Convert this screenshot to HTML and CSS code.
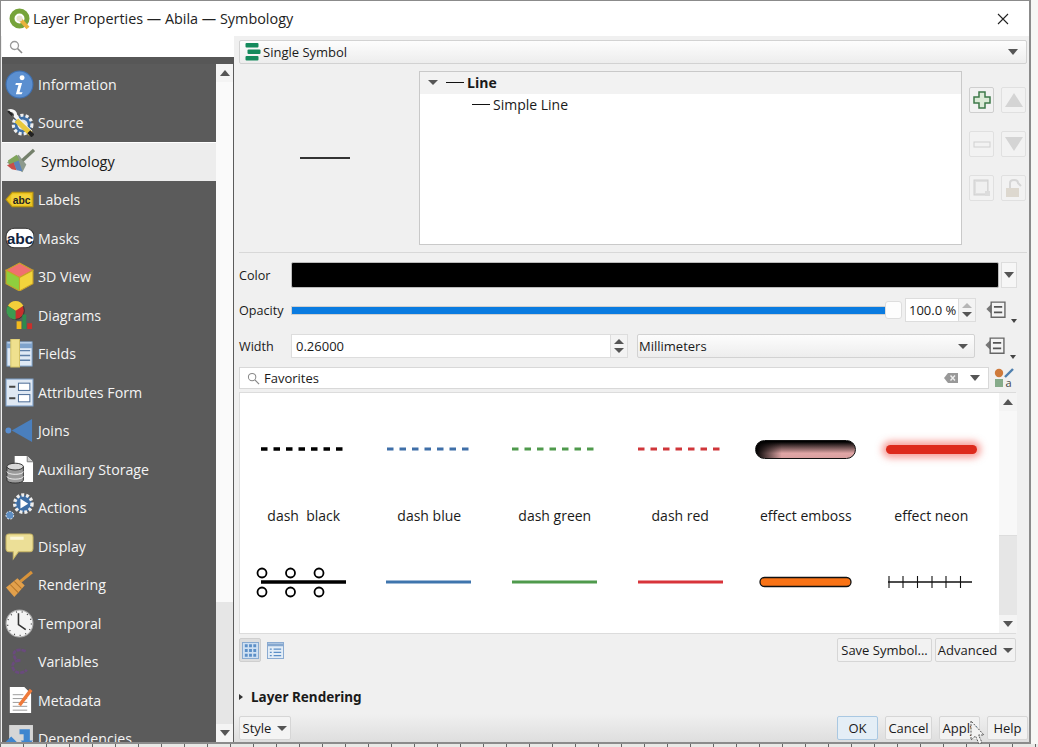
FILE: index.html
```html
<!DOCTYPE html>
<html lang="en">
<head>
<meta charset="utf-8">
<title>Layer Properties — Abila — Symbology</title>
<link rel="stylesheet" href="styles.css">
</head>
<body>
<svg class="defs" width="0" height="0" aria-hidden="true">
  <defs>
    <symbol id="dd" viewBox="0 0 32 32"><path d="M2 16 L9 9 V23 Z" fill="#777"/><path d="M9 6 H29 V28 H9 Z" fill="#f4f4f4" stroke="#666" stroke-width="2"/><path d="M13 13 H25 M13 21 H25" stroke="#555" stroke-width="2.5"/></symbol>
  </defs>
</svg>
<div class="window">
  <header class="titlebar">
    <svg class="logo" viewBox="0 0 22 22"><circle cx="10.500" cy="10.500" r="7.500" fill="none" stroke="#76a33a" stroke-width="5"/><path d="M10 10 L19 20" stroke="#e9b23c" stroke-width="4"/><circle cx="10.500" cy="10.500" r="3" fill="#e8e2cf"/></svg>
    <span class="title">Layer Properties — Abila — Symbology</span>
    <svg class="close" viewBox="0 0 12 12"><path d="M1 1 L11 11 M11 1 L1 11" stroke="#222" stroke-width="1.100" fill="none"/></svg>
  </header>
  <div class="body">
    <aside class="nav">
      <div class="nav-search">
        <svg class="mag" viewBox="0 0 14 14"><circle cx="5.500" cy="5.500" r="4" fill="none" stroke="#999" stroke-width="1.300"/><path d="M8.500 8.500 L13 13" stroke="#888" stroke-width="1.600"/></svg>
      </div>
      <div class="nav-strip"></div>
      <div class="nav-main">
        <ul class="nav-list">
          <li class="nav-item"><svg class="ni" viewBox="0 0 28 28"><circle cx="14" cy="14" r="13" fill="#5b8fd0" stroke="#3f70b0"/><circle cx="16.500" cy="7.500" r="2.400" fill="#fff"/><path d="M10.500 12.500 H16.500 L14 21.500 H17 L16 23.500 H10.500 L13 14.500 H10 Z" fill="#fff"/></svg><span>Information</span></li>
          <li class="nav-item"><svg class="ni" viewBox="0 0 28 28"><circle cx="17" cy="16" r="9" fill="#3e6ea5" stroke="#eee" stroke-width="3" stroke-dasharray="3 2"/><circle cx="17" cy="16" r="5" fill="#e7e7e7"/><path d="M3 3 C8 1 11 5 10 8 L25 23" stroke="#f7f7f7" stroke-width="3" fill="none"/><path d="M3 3 L7 7" stroke="#222" stroke-width="2"/><path d="M11 12 L25 25" stroke="#e8c83c" stroke-width="5"/><path d="M23 23 L27 27" stroke="#222" stroke-width="4"/></svg><span>Source</span></li>
          <li class="nav-item active"><svg class="ni" viewBox="0 0 30 28"><path d="M1 15 L13 7 L21 17 L17 25 Z" fill="#8d9a8c"/><path d="M2 13 L11 7 L14 13 L4 19 Z" fill="#7fa45a"/><path d="M1 18 L8 15 L11 23 L6 22 Z" fill="#c94e4a"/><path d="M8 15 L13 13 L17 24 L11 23 Z" fill="#5b83b8"/><path d="M17 13 L29 2" stroke="#74806b" stroke-width="3.500"/></svg><span>Symbology</span></li>
          <li class="nav-item"><svg class="ni" viewBox="0 0 28 28"><path d="M1 14 L7 7 H27 V21 H7 Z" fill="#e9c21f" stroke="#b8930e"/><rect x="6" y="9" width="19" height="10" rx="2" fill="#f3d23a"/><text x="16" y="18" class="abc-s">abc</text></svg><span>Labels</span></li>
          <li class="nav-item"><svg class="ni" viewBox="0 0 28 28"><rect x="1" y="4" width="27" height="19" rx="8" fill="#fff" stroke="#333"/><text x="14.500" y="19" class="abc-m">abc</text></svg><span>Masks</span></li>
          <li class="nav-item"><svg class="ni" viewBox="0 0 28 28"><path d="M14 1 L27 8 L14 15 L1 8 Z" fill="#f07070" stroke="#c9a227"/><path d="M1 8 L14 15 V28 L1 21 Z" fill="#8fce3e" stroke="#c9a227"/><path d="M27 8 L14 15 V28 L27 21 Z" fill="#f2d43c" stroke="#c9a227"/></svg><span>3D View</span></li>
          <li class="nav-item"><svg class="ni" viewBox="0 0 28 30"><circle cx="10" cy="10" r="9" fill="#c9302c" stroke="#333"/><path d="M10 10 L2 5 A9 9 0 0 1 18 5 Z" fill="#f2cf3a"/><path d="M10 10 V19 A9 9 0 0 1 2 5 Z" fill="#3d9b51"/><rect x="11" y="21" width="5" height="8" fill="#f2b91d"/><rect x="17" y="14" width="4" height="15" fill="#2e8b4e"/><rect x="22" y="23" width="5" height="6" fill="#c9302c"/></svg><span>Diagrams</span></li>
          <li class="nav-item"><svg class="ni" viewBox="0 0 28 30"><rect x="1" y="3" width="26" height="25" fill="#dfe9f5" stroke="#7ea2cb"/><path d="M1 7 H27" stroke="#7ea2cb" stroke-width="5"/><path d="M14 12 H25 M14 17 H25 M14 22 H25" stroke="#5d7ea6" stroke-width="1.500"/><rect x="5" y="0" width="9" height="29" fill="#efe08e" stroke="#d3c165"/></svg><span>Fields</span></li>
          <li class="nav-item"><svg class="ni" viewBox="0 0 28 28"><rect x="1" y="1" width="26" height="26" fill="#dfe8f3" stroke="#7ea2cb"/><rect x="13" y="5" width="11" height="7" fill="#fff" stroke="#4f6f99"/><rect x="13" y="16" width="11" height="7" fill="#fff" stroke="#4f6f99"/><path d="M4 8.500 H10 M4 19.500 H10" stroke="#444" stroke-width="2"/></svg><span>Attributes Form</span></li>
          <li class="nav-item"><svg class="ni" viewBox="0 0 30 28"><circle cx="3.500" cy="14" r="3" fill="#5b8fd0"/><path d="M7 14 L28 2 V26 Z" fill="#4a7fbd"/></svg><span>Joins</span></li>
          <li class="nav-item"><svg class="ni" viewBox="0 0 28 30"><path d="M9 1 H22 L28 7 V28 H9 Z" fill="#fff"/><path d="M22 1 V7 H28" fill="#ccc" stroke="#777"/><path d="M1 12 V26 C1 30 18 30 18 26 V12 Z" fill="#9a9a9a" stroke="#333"/><ellipse cx="9.500" cy="12" rx="8.500" ry="3.500" fill="#d8d8d8" stroke="#333"/><path d="M1 17 C1 21 18 21 18 17 M1 22 C1 26 18 26 18 22" fill="none" stroke="#eee"/></svg><span>Auxiliary Storage</span></li>
          <li class="nav-item"><svg class="ni" viewBox="0 0 30 30"><circle cx="19" cy="11" r="9" fill="#3e6ea5" stroke="#eee" stroke-width="3.500" stroke-dasharray="3 2"/><path d="M16 6 L24 11 L16 16 Z" fill="#fff"/><circle cx="5" cy="23" r="4" fill="#5f8ec2" stroke="#eee" stroke-dasharray="2 1.500"/></svg><span>Actions</span></li>
          <li class="nav-item"><svg class="ni" viewBox="0 0 28 28"><path d="M4 2 H24 Q27 2 27 5 V16 Q27 19 24 19 H13 L8 26 L8 19 H4 Q1 19 1 16 V5 Q1 2 4 2 Z" fill="#ecdf97" stroke="#cbb968"/><path d="M5 6 H18" stroke="#fbf6d8" stroke-width="3"/></svg><span>Display</span></li>
          <li class="nav-item"><svg class="ni" viewBox="0 0 28 28"><path d="M15 11 L26 2" stroke="#d8933a" stroke-width="3"/><path d="M1 17 L12 8 L19 15 L9 26 Z" fill="#e2a04b"/><path d="M5 14 L13 22 M9 11 L16 18" stroke="#b3752a"/></svg><span>Rendering</span></li>
          <li class="nav-item"><svg class="ni" viewBox="0 0 28 28"><circle cx="14" cy="14" r="13" fill="#f4f4f4" stroke="#aaa"/><circle cx="14" cy="14" r="11.500" fill="none" stroke="#444" stroke-width="1.200" stroke-dasharray="1 4.600"/><path d="M13 4 V15 L20 20" fill="none" stroke="#333" stroke-width="1.500"/></svg><span>Temporal</span></li>
          <li class="nav-item"><svg class="ni" viewBox="0 0 28 28"><path d="M20 4 C12 1 7 4 9 9 C10 13 13 13 15 13 C8 13 6 17 8 21 C10 26 18 26 21 22" fill="none" stroke="#6a4a7e" stroke-width="2.600" stroke-dasharray="4 1"/></svg><span>Variables</span></li>
          <li class="nav-item"><svg class="ni" viewBox="0 0 28 30"><path d="M4 1 H19 L26 8 V28 H4 Z" fill="#fff"/><path d="M7 9 H18 M7 13 H22 M7 17 H22 M7 21 H22 M7 25 H22" stroke="#999"/><path d="M14 20 L26 4" stroke="#ef7a3a" stroke-width="3.500"/></svg><span>Metadata</span></li>
          <li class="nav-item"><svg class="ni" viewBox="0 0 28 28"><rect x="4" y="1" width="23" height="24" fill="#d6d6d6"/><path d="M0 18 L6 12 L12 18 H9 V28 H3 V18 Z" fill="#3f86cf"/><path d="M14 5 H24 V16 H27 L21 22 L15 16 H18 V10 H14 Z" fill="#3f86cf"/></svg><span>Dependencies</span></li>
        </ul>
        <div class="nav-scroll">
          <button class="sb-btn"><i class="tri up"></i></button>
          <div class="sb-thumb"></div>
          <div class="sb-track"></div>
          <button class="sb-btn"><i class="tri down"></i></button>
        </div>
      </div>
    </aside>

    <div class="pane">
      <main class="main">
        <div class="combo renderer">
          <svg class="ren-ic" viewBox="0 0 16 18"><rect x="1" y="0" width="13" height="4.500" rx="1" fill="#148a5c"/><rect x="3" y="6.500" width="13" height="4.500" rx="1" fill="#148a5c"/><rect x="1" y="13" width="13" height="4.500" rx="1" fill="#148a5c"/></svg>
          <span class="grow">Single Symbol</span><i class="tri down"></i>
        </div>

        <section class="symbol-area">
          <div class="preview"><span class="pv-line"></span></div>
          <div class="tree">
            <div class="tree-row head"><i class="tri down"></i><span class="t-line"></span><b>Line</b></div>
            <div class="tree-row child"><span class="t-line"></span><span>Simple Line</span></div>
          </div>
          <div class="layer-btns">
            <button class="icb on"><svg viewBox="0 0 20 20"><path d="M7 2 H13 V7 H18 V13 H13 V18 H7 V13 H2 V7 H7 Z" fill="#dcebd8" stroke="#3e7a4a" stroke-width="1.500"/></svg></button>
            <button class="icb"><svg viewBox="0 0 20 20"><path d="M10 3 L19 17 H1 Z" fill="#d4d4d4"/></svg></button>
            <button class="icb"><svg viewBox="0 0 20 20"><rect x="2" y="8" width="16" height="5" fill="#f2f2f2" stroke="#d0d0d0"/></svg></button>
            <button class="icb"><svg viewBox="0 0 20 20"><path d="M10 17 L19 3 H1 Z" fill="#d4d4d4"/></svg></button>
            <button class="icb"><svg viewBox="0 0 20 20"><rect x="2" y="2" width="14" height="15" fill="#e0e0e0" stroke="#cfcfcf"/><rect x="4" y="4" width="11" height="11" fill="#f0f0f0"/><rect x="13" y="13" width="5" height="5" fill="#dcdcdc"/></svg></button>
            <button class="icb"><svg viewBox="0 0 20 20"><rect x="2" y="10" width="13" height="9" fill="#ddd8cf"/><path d="M6 10 V5 C6 1 14 1 14 5 L17 8" fill="none" stroke="#d6d6d6" stroke-width="2"/></svg></button>
          </div>
        </section>
        <hr class="sep">

        <div class="form-row color-row">
          <label>Color</label>
          <div class="swatch"></div>
          <button class="sw-drop"><i class="tri down"></i></button>
        </div>

        <div class="form-row opacity-row">
          <label>Opacity</label>
          <div class="slider"><div class="slider-fill"></div><div class="slider-handle"></div></div>
          <div class="spin pct"><span class="grow">100.0 %</span><div class="steppers"><i class="tri up dim"></i><i class="tri down"></i></div></div>
          <button class="ddb"><svg viewBox="0 0 32 32"><use href="#dd"/></svg><i class="tri down mini"></i></button>
        </div>

        <div class="form-row width-row">
          <label>Width</label>
          <div class="spin w-input"><span class="grow">0.26000</span><div class="steppers"><i class="tri up"></i><i class="tri down"></i></div></div>
          <div class="combo unit"><span class="grow">Millimeters</span><i class="tri down"></i></div>
          <button class="ddb"><svg viewBox="0 0 32 32"><use href="#dd"/></svg><i class="tri down mini"></i></button>
        </div>

        <div class="search-row">
          <div class="searchbox">
            <svg class="mag" viewBox="0 0 14 14"><circle cx="5.500" cy="5.500" r="4" fill="none" stroke="#888" stroke-width="1.100"/><path d="M8.500 8.500 L13 13" stroke="#888" stroke-width="1.300"/></svg>
            <span class="grow">Favorites</span>
            <svg class="clear" viewBox="0 0 14 10"><path d="M0 5 L4 0 H14 V10 H4 Z" fill="#999"/><path d="M6.500 2.500 L11 7.500 M11 2.500 L6.500 7.500" stroke="#eee" stroke-width="1.400"/></svg>
            <i class="tri down"></i>
          </div>
          <svg class="style-ic" viewBox="0 0 20 20"><circle cx="5" cy="5" r="4.200" fill="#cf7a3b"/><path d="M11 9 L19 1" stroke="#4f7fae" stroke-width="2.400"/><rect x="1" y="11" width="8" height="8" fill="#86ab8a"/><text x="14.500" y="18.500" class="style-a">a</text></svg>
        </div>

        <div class="styles">
          <div class="grid">
            <figure class="cell"><svg viewBox="0 0 125 40"><path d="M20 20 H102" stroke="#000" stroke-width="3.600" stroke-dasharray="6.500 6"/></svg><figcaption>dash  black</figcaption></figure>
            <figure class="cell"><svg viewBox="0 0 125 40"><path d="M20 20 H102" stroke="#3f6fa8" stroke-width="3" stroke-dasharray="6.500 6"/></svg><figcaption>dash blue</figcaption></figure>
            <figure class="cell"><svg viewBox="0 0 125 40"><path d="M20 20 H102" stroke="#4f9a4c" stroke-width="3" stroke-dasharray="6.500 6"/></svg><figcaption>dash green</figcaption></figure>
            <figure class="cell"><svg viewBox="0 0 125 40"><path d="M20 20 H102" stroke="#d0363a" stroke-width="3" stroke-dasharray="6.500 6"/></svg><figcaption>dash red</figcaption></figure>
            <figure class="cell"><div class="emboss"></div><figcaption>effect emboss</figcaption></figure>
            <figure class="cell"><div class="neon"></div><figcaption>effect neon</figcaption></figure>
            <figure class="cell"><svg viewBox="0 0 125 40"><path d="M20 20 H105" stroke="#000" stroke-width="3.400"/><g fill="none" stroke="#000" stroke-width="1.800"><circle cx="21" cy="11" r="4.500"/><circle cx="49.500" cy="11" r="4.500"/><circle cx="78" cy="11" r="4.500"/><circle cx="21" cy="30" r="4.500"/><circle cx="49.500" cy="30" r="4.500"/><circle cx="78" cy="30" r="4.500"/></g></svg></figure>
            <figure class="cell"><svg viewBox="0 0 125 40"><path d="M19 20 H104" stroke="#3f75ad" stroke-width="3"/></svg></figure>
            <figure class="cell"><svg viewBox="0 0 125 40"><path d="M20 20 H105" stroke="#4f9a4c" stroke-width="3"/></svg></figure>
            <figure class="cell"><svg viewBox="0 0 125 40"><path d="M20 20 H105" stroke="#d8343a" stroke-width="3"/></svg></figure>
            <figure class="cell"><svg viewBox="0 0 125 40"><rect x="17" y="15.500" width="91" height="9" rx="4.500" fill="#f97316" stroke="#111" stroke-width="1.300"/></svg></figure>
            <figure class="cell"><svg viewBox="0 0 125 40"><path d="M19 20 H103" stroke="#111" stroke-width="1.400"/><path d="M20 14 V26 M34 14 V26 M48.500 14 V26 M63 14 V26 M77 14 V26 M91.500 14 V26" stroke="#111" stroke-width="1.100"/></svg></figure>
          </div>
          <div class="list-scroll">
            <button class="sb-btn"><i class="tri up"></i></button>
            <div class="ls-thumb"></div>
            <div class="sb-track"></div>
            <button class="sb-btn"><i class="tri down"></i></button>
          </div>
        </div>

        <div class="list-tools">
          <button class="view-btn pressed"><svg viewBox="0 0 18 18"><rect x="0.500" y="0.500" width="17" height="17" fill="#cfe0f2" stroke="#86a8cf"/><path d="M3 4 H15 M3 9 H15 M3 14 H15" stroke="#5c8fc7" stroke-width="3" stroke-dasharray="3 1.500"/></svg></button>
          <button class="view-btn"><svg viewBox="0 0 18 18"><rect x="0.500" y="0.500" width="17" height="17" fill="#e3edf7" stroke="#86a8cf"/><path d="M1 3 H17" stroke="#86a8cf" stroke-width="3"/><path d="M3 7.500 H5 M7 7.500 H15 M3 11 H5 M7 11 H15 M3 14.500 H5 M7 14.500 H15" stroke="#5c8fc7" stroke-width="1.300"/></svg></button>
          <span class="grow"></span>
          <button class="btn save">Save Symbol...</button>
          <button class="btn adv">Advanced <i class="tri down"></i></button>
        </div>

        <div class="rendering"><i class="tri right"></i><b>Layer Rendering</b></div>
      </main>
      <footer class="footer">
        <button class="btn style-btn">Style <i class="tri down"></i></button>
        <span class="grow"></span>
        <button class="btn ok">OK</button>
        <button class="btn cancel">Cancel</button>
        <button class="btn apply">Apply</button>
        <button class="btn help">Help</button>
      </footer>
    </div>
  </div>
  <svg class="cursor" viewBox="0 0 20 26"><path d="M3 1 V20 L7.500 16 L11 24 L14 22.500 L10.500 15 H16 Z" fill="#f2f2f2" stroke="#555" stroke-dasharray="2 1.200"/></svg>
</div>
</body>
</html>
```
FILE: styles.css
```css
* { box-sizing: border-box; }
html, body { margin: 0; height: 100%; }
body {
  width: 1038px;
  height: 747px;
  overflow: hidden;
  background: repeating-linear-gradient(90deg, #666 0 1px, #e9e9e6 1px 23px) left bottom / 100% 3px no-repeat, #f7f7f5;
  font-family: "Open Sans", "Noto Sans", sans-serif;
  font-size: 13px;
  color: #1a1a1a;
}
.defs { position: absolute; }
.grow { flex: 1 1 auto; }
button { font: inherit; color: inherit; margin: 0; padding: 0; }
ul { list-style: none; margin: 0; padding: 0; }
figure { margin: 0; }

.tri { display: inline-block; width: 0; height: 0; border-style: solid; flex: none; }
.tri.down { border-width: 6px 5.500px 0; border-color: #555 transparent transparent; }
.tri.up { border-width: 0 5.500px 6px; border-color: transparent transparent #555; }
.tri.right { border-width: 3.500px 0 3.500px 4px; border-color: transparent transparent transparent #333; }
.tri.dim { border-bottom-color: #b5b5b5; }

.window {
  position: relative;
  width: 1031px;
  height: 744px;
  background: #f0f0f0;
  border: 1px solid #8b8b8b;
  border-width: 1px 2px 2px 1px;
  display: flex;
  flex-direction: column;
}

.titlebar {
  height: 35px;
  flex: none;
  background: #fff;
  display: flex;
  align-items: center;
  padding: 0 20px 0 8px;
  gap: 2px;
}
.logo { width: 22px; height: 22px; }
.title { flex: 1; font-size: 14.400px; color: #222; }
.close { width: 12px; height: 12px; }

.body { flex: 1; min-height: 0; display: flex; }

.nav { width: 233px; flex: none; display: flex; flex-direction: column; padding-left: 1px; }
.nav-search {
  height: 21px;
  flex: none;
  background: #fff;
  display: flex;
  align-items: center;
  padding: 1px 0 0 7px;
}
.mag { width: 14px; height: 14px; flex: none; }
.nav-strip { height: 7px; flex: none; background: #575757; }
.nav-main { flex: 1; min-height: 0; display: flex; background: #5b5b5b; }
.nav-list { width: 214px; flex: none; overflow: hidden; padding-top: 1px; }
.nav-item {
  height: 38.500px;
  display: flex;
  align-items: center;
  gap: 4px;
  padding-left: 3px;
  color: #f4f4f4;
  font-size: 14.200px;
  white-space: nowrap;
}
.nav-item.active { background: #ededed; color: #1a1a1a; gap: 6px; border-top: 1px solid #fff; padding-left: 4px; font-size: 14.500px; }
.ni { width: 29px; height: 29px; flex: none; }
.abc-s { font: 700 10px "Liberation Sans", sans-serif; fill: #222; text-anchor: middle; }
.abc-m { font: 700 15px "Liberation Sans", sans-serif; fill: #12243f; text-anchor: middle; }

.nav-scroll, .list-scroll { width: 18px; flex: none; display: flex; flex-direction: column; background: #f4f4f4; }
.nav-scroll { width: 17px; }
.sb-btn {
  height: 18px;
  flex: none;
  border: 0;
  background: #f4f4f4;
  display: flex;
  align-items: center;
  justify-content: center;
}
.sb-thumb { height: 520px; flex: none; background: #fafafa; }
.ls-thumb { height: 125px; flex: none; background: #f8f8f8; border-bottom: 1px solid #ddd; }
.sb-track { flex: 1; background: #e6e6e6; }

.pane { flex: 1; min-width: 0; display: flex; flex-direction: column; }
.main { flex: 1; min-height: 0; display: flex; flex-direction: column; padding: 4px 2px 0 5px; }

.combo {
  display: flex;
  align-items: center;
  background: linear-gradient(#fdfdfd, #ededed);
  border: 1px solid #d2d2d2;
  border-radius: 2px;
}
.renderer { height: 24px; padding: 0 8px 0 4px; gap: 2px; flex: none; }
.ren-ic { width: 17px; height: 18px; flex: none; }

.symbol-area { margin-top: 7px; height: 174px; flex: none; display: flex; font-size: 14px; }
.preview { width: 180px; flex: none; display: flex; align-items: center; justify-content: center; padding: 0 9px 0 0; }
.pv-line { width: 50px; height: 1.500px; background: #333; }
.tree { width: 543px; flex: none; background: #fff; border: 1px solid #c9c9c9; }
.tree-row { height: 21.500px; display: flex; align-items: center; }
.tree-row.head { background: #f2f2f2; padding-left: 8px; }
.tree-row.head .tri { border-width: 5px 5px 0; margin-right: 8px; }
.tree-row.child { padding-left: 52px; }
.t-line { width: 18px; height: 1px; background: #111; margin-right: 3px; flex: none; }
.layer-btns {
  width: 56px;
  margin-left: 7px;
  display: grid;
  grid-template-columns: 25px 25px;
  grid-auto-rows: 26px;
  column-gap: 7px;
  row-gap: 18px;
  padding-top: 16px;
  align-content: start;
  flex: none;
}
.icb { background: #f2f2f2; border: 1px solid #e0e0e0; border-radius: 2px; display: flex; align-items: center; justify-content: center; }
.icb.on { border-color: #cfcfcf; }
.icb svg { width: 20px; height: 20px; }
.sep { width: 100%; margin: 7px 0 9px; border: 0; border-top: 1px solid #d8d8d8; flex: none; }

.form-row { display: flex; align-items: center; flex: none; }
.form-row label { width: 52px; flex: none; font-size: 12.600px; }
.color-row { height: 26px; margin-bottom: 10px; }
.swatch { width: 708px; height: 26px; flex: none; background: #000; border: 1px solid #bbb; border-radius: 2px; }
.sw-drop { width: 16px; height: 26px; margin-left: 2px; background: #f6f6f6; border: 1px solid #ddd; display: flex; align-items: center; justify-content: center; }
.opacity-row { height: 24px; margin-bottom: 12px; }
.slider { position: relative; width: 611px; height: 24px; flex: none; display: flex; align-items: center; }
.slider-fill { width: 596px; height: 9px; background: #0a7be0; border: 1px solid #d0d0d0; }
.slider-handle { position: absolute; left: 594px; top: 3px; width: 17px; height: 18px; background: #fdfdfd; border: 1px solid #ddd; border-radius: 3px; }
.spin { display: flex; align-items: center; background: #fff; border: 1px solid #ddd; height: 24px; padding-left: 3px; white-space: nowrap; }
.pct { width: 71px; margin-left: 3px; flex: none; }
.steppers { width: 17px; align-self: stretch; background: #f3f3f3; border-left: 1px solid #ddd; display: flex; flex-direction: column; align-items: center; justify-content: space-around; padding: 2px 0; flex: none; }
.steppers .tri { border-left-width: 5px; border-right-width: 5px; border-top-width: 5px; border-bottom-width: 5px; }
.steppers .tri.up { border-top-width: 0; }
.steppers .tri.down { border-bottom-width: 0; }
.ddb { position: relative; width: 31px; height: 24px; margin-left: 10px; flex: none; background: transparent; border: 0; }
.ddb svg { width: 22px; height: 22px; position: absolute; left: -1px; top: 0; }
.ddb .mini { position: absolute; right: 0; bottom: -1px; border-width: 4px 3.500px 0; border-top-color: #444; }
.width-row { height: 24px; margin-bottom: 9px; }
.w-input { width: 337px; flex: none; padding-left: 4px; }
.unit { width: 338px; height: 24px; margin-left: 9px; flex: none; padding: 0 6px 0 1px; }
.unit .tri { border-width: 5px 5.500px 0; }

.search-row { height: 22px; display: flex; align-items: center; flex: none; margin-bottom: 3px; }
.searchbox { width: 750px; height: 22px; background: #fff; border: 1px solid #d8d8d8; display: flex; align-items: center; padding: 0 8px 0 7px; gap: 4px; flex: none; }
.searchbox .mag { width: 13px; height: 13px; }
.clear { width: 14px; height: 10px; margin-right: 8px; flex: none; }
.style-ic { width: 20px; height: 20px; margin-left: 5px; flex: none; }
.style-a { font: 11px "Open Sans", sans-serif; fill: #444; text-anchor: middle; }

.styles { width: 777px; height: 242px; flex: none; display: flex; background: #fff; border: 1px solid #dcdcdc; border-width: 1px 0 1px 1px; }
.grid { width: 759px; flex: none; display: grid; grid-template-columns: repeat(6, 125.500px); grid-auto-rows: 132.500px; padding: 36px 0 0 1px; overflow: hidden; }
.cell { display: flex; flex-direction: column; align-items: center; height: 132.500px; }
.cell svg { width: 125px; height: 40px; flex: none; display: block; }
.cell figcaption { margin-top: 37px; white-space: pre; font-size: 14px; line-height: 20px; }
.emboss { width: 101px; height: 19px; margin: 10.500px 0; flex: none; border-radius: 10px; border: 1px solid #111; background: linear-gradient(90deg, #000, transparent 26%), linear-gradient(#000 5%, #e0a5a5 72%, #d9a0a0); }
.neon { width: 91px; height: 9px; margin: 15.500px 0; flex: none; border-radius: 5px; background: #dd2a1c; box-shadow: 0 0 7px 4px rgba(240,70,60,.5); }

.list-tools { height: 24px; margin-top: 4px; display: flex; align-items: center; flex: none; width: 777px; gap: 3px; }
.view-btn { width: 22px; height: 24px; border: 1px solid transparent; background: transparent; display: flex; align-items: center; justify-content: center; border-radius: 2px; }
.view-btn.pressed { background: #dedede; border-color: #cfcfcf; }
.view-btn svg { width: 17px; height: 17px; }
.btn {
  height: 24px;
  border: 1px solid #d6d6d6;
  border-radius: 2px;
  background: #f2f2f2;
  display: inline-flex;
  align-items: center;
  justify-content: center;
  gap: 6px;
  white-space: nowrap;
  flex: none;
}
.btn .tri { border-width: 5px 5px 0; }
.save { width: 95px; }
.adv { width: 81px; }
.rendering { margin-top: 25px; display: flex; align-items: center; gap: 8px; height: 20px; flex: none; }
.rendering b { font-family: "Noto Sans", "Open Sans", sans-serif; font-size: 13.500px; }

.footer {
  height: 28px;
  flex: none;
  display: flex;
  align-items: center;
  padding: 0 1px 0 5px;
  background: linear-gradient(#f0f0f0, #dedede);
}
.style-btn { width: 52px; background: #f4f4f4; }
.ok { width: 41px; background: #e4eef6; border-color: #a9c8e2; }
.cancel { width: 47px; margin-left: 7px; }
.apply { width: 41px; margin-left: 7px; }
.help { width: 41px; margin-left: 7px; }
.cursor { position: absolute; left: 967px; top: 719px; width: 20px; height: 26px; }
```
